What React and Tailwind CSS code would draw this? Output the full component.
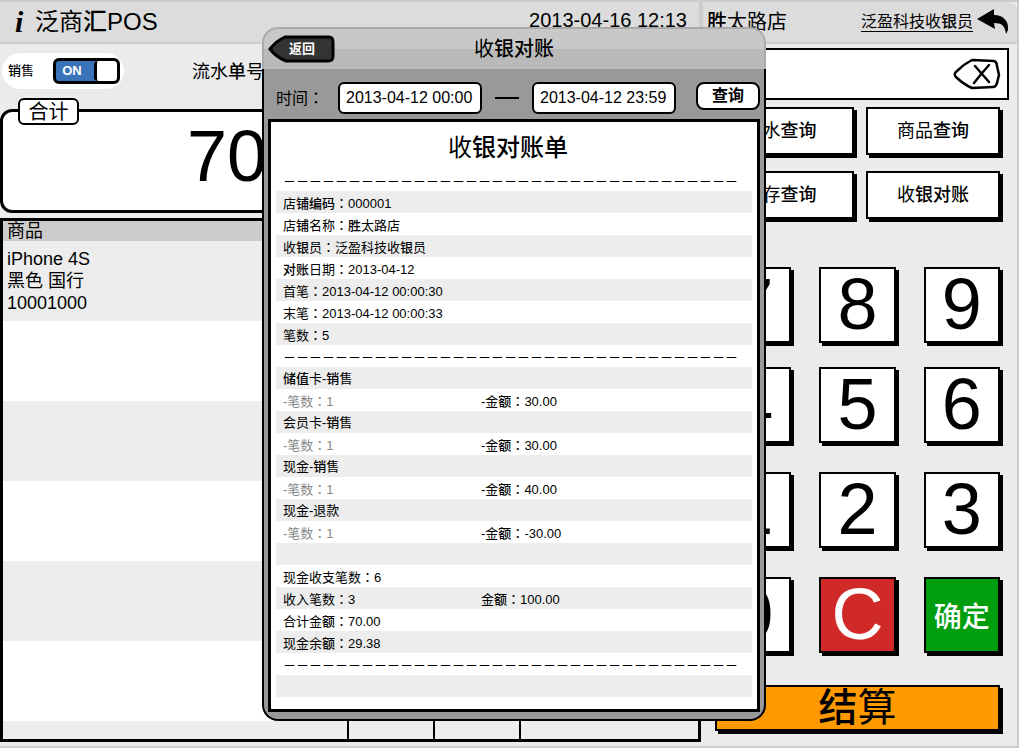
import React from "react";

const HEAVY = "汇单银对账铺编码胜储值销询查结额";

// Sets each run of characters in its own weight; the fullwidth colon sits centred in its box.
function T({ children }) {
  const runs = [];
  for (const ch of children) {
    const kind = ch === "：" ? "colon" : HEAVY.includes(ch) ? "heavy" : "plain";
    const last = runs[runs.length - 1];
    if (last && last.kind === kind) last.text += ch;
    else runs.push({ kind, text: ch });
  }
  return (
    <span>
      {runs.map((r, i) => {
        if (r.kind === "heavy") return <span key={i} className="font-medium">{r.text}</span>;
        if (r.kind === "colon") return <span key={i} className="font-['Noto_Sans_CJK_TC']">{r.text}</span>;
        return r.text;
      })}
    </span>
  );
}

const DASHES = "－".repeat(35);

const receipt = [
  ["店铺编码：000001"],
  ["店铺名称：胜太路店"],
  ["收银员：泛盈科技收银员"],
  ["对账日期：2013-04-12"],
  ["首笔：2013-04-12 00:00:30"],
  ["末笔：2013-04-12 00:00:33"],
  ["笔数：5"],
  [DASHES],
  ["储值卡-销售"],
  ["-笔数：1", "-金额：30.00"],
  ["会员卡-销售"],
  ["-笔数：1", "-金额：30.00"],
  ["现金-销售"],
  ["-笔数：1", "-金额：40.00"],
  ["现金-退款"],
  ["-笔数：1", "-金额：-30.00"],
  [""],
  ["现金收支笔数：6"],
  ["收入笔数：3", "金额：100.00"],
  ["合计金额：70.00"],
  ["现金余额：29.38"],
  [DASHES],
  [""],
];

function BackspaceIcon() {
  return (
    <svg width="48" height="32" viewBox="0 0 48 32" fill="none" stroke="#000" strokeLinecap="round" strokeLinejoin="round" aria-hidden="true">
      <path d="M19 2 L41 3 Q44 4 44 8 L46 17 L44 25 Q43 29 40 29 L19 30 Q10 26 3 19 Q0 16 4 13 Q11 6 19 2 Z" strokeWidth="2.5" />
      <path d="M22 8 L36 24 M36 7 Q28 16 21 25" strokeWidth="2.5" />
    </svg>
  );
}

function ReplyIcon() {
  return (
    <svg width="32" height="26" viewBox="0 0 32 26" aria-hidden="true">
      <path d="M0 10 L17 0 L17 6 C26 6 32 12 31 21 L29 25 C28 17 25 14 17 14 L18 20 Z" fill="#000" />
    </svg>
  );
}

function Key({ label, className = "bg-white pb-0.5 text-7xl" }) {
  return (
    <button className={`flex h-[76px] items-center justify-center border-2 border-black leading-none shadow-[3px_3px_0_#000] ${className}`}>
      {label}
    </button>
  );
}

function Action({ label, className = "" }) {
  return (
    <button className={`h-12 border-2 border-black bg-white text-lg shadow-[3px_3px_0_#000] ${className}`}>
      <T>{label}</T>
    </button>
  );
}

function Sales() {
  return (
    <section className="flex min-w-0 flex-1 flex-col">
      <header className="flex h-[42px] items-center justify-between border-b-2 border-r-2 border-[#ccc] bg-[#dcdcdc] pr-3 pl-[15px]">
        <h1 className="flex items-center gap-2 text-2xl">
          <span className="w-3 font-['Liberation_Serif',serif] text-3xl leading-none font-bold italic">i</span>
          <T>泛商汇POS</T>
        </h1>
        <time className="pb-1 text-xl">2013-04-16 12:13</time>
      </header>

      <div className="flex h-[54px] items-center pl-0.5">
        <label className="flex h-9 w-[122px] items-center justify-between rounded-full bg-white pr-1 pl-1.5 text-[13px]">
          <T>销售</T>
          <span className="relative flex h-[26px] w-[67px] rounded-md border-3 border-black bg-[#3b73b9]">
            <input type="checkbox" defaultChecked className="absolute inset-0 opacity-0" />
            <span className="flex flex-1 items-center justify-center pr-1.5 text-[13px] font-bold text-white">ON</span>
            <span className="w-[23px] rounded-sm border-l-3 border-black bg-white" />
          </span>
        </label>
        <span className="ml-[68px] text-lg"><T>流水单号：</T></span>
      </div>

      <div className="relative mt-[11px] mr-1 flex h-[104px] items-center rounded-xl border-3 border-black bg-white pb-2.5 pl-[184px]">
        <h2 className="absolute -top-3.5 left-[15px] flex h-[27px] w-[61px] items-center justify-center rounded-md border-2 border-black bg-white text-xl">
          合计
        </h2>
        <output className="text-7xl leading-none">70.00</output>
      </div>

      <div className="mt-[5px] mb-1 flex flex-1 flex-col overflow-hidden border-3 border-black">
        <table className="w-full table-fixed border-collapse">
          <thead>
            <tr className="h-5 bg-[#ccc]">
              <th className="w-[345px] px-1 text-left text-lg leading-5 font-normal">商品</th>
              <th className="w-[86px]" />
              <th className="w-[86px]" />
              <th />
            </tr>
          </thead>
          <tbody>
            {[0, 1, 2, 3, 4, 5].map((n) => (
              <tr key={n} className="h-20 odd:bg-[#ededed] even:bg-white">
                <td className="border-r-2 border-black px-1 py-0 text-lg leading-[22px]">
                  {n === 0 && (<>iPhone 4S<br />黑色 国行<br />10001000</>)}
                </td>
                <td className="border-r-2 border-black" />
                <td className="border-r-2 border-black" />
                <td />
              </tr>
            ))}
            <tr className="h-[18px] bg-[#ededed]">
              <td className="border-r-2 border-black" />
              <td className="border-r-2 border-black" />
              <td className="border-r-2 border-black" />
              <td />
            </tr>
          </tbody>
        </table>
      </div>
    </section>
  );
}

function Register() {
  return (
    <aside className="flex w-[318px] shrink-0 flex-col border-r-2 border-[#ccc]">
      <header className="flex h-[42px] items-center justify-between rounded-tr-lg border-b-2 border-l-2 border-[#ccc] bg-[#dcdcdc] pr-2 pl-1">
        <span className="text-xl"><T>胜太路店</T></span>
        <span className="flex items-center gap-1">
          <a href="#cashier" className="text-base underline underline-offset-4"><T>泛盈科技收银员</T></a>
          <button aria-label="退出"><ReplyIcon /></button>
        </span>
      </header>
      <div className="mt-1 mr-2 ml-1.5 flex h-[52px] items-center border-2 border-black bg-white pr-1.5">
        <input aria-label="输入" className="h-full min-w-0 flex-1 bg-transparent px-2 outline-none" />
        <button aria-label="删除"><BackspaceIcon /></button>
      </div>
      <div className="mt-[7px] mr-[17px] ml-1.5 flex flex-col gap-4">
        <div className="flex gap-3">
          <Action label="流水查询" className="flex-1" />
          <Action label="商品查询" className="w-[134px]" />
        </div>
        <div className="flex gap-3">
          <Action label="库存查询" className="flex-1" />
          <Action label="收银对账" className="w-[134px]" />
        </div>
      </div>
      <div className="mt-12 mr-[17px] ml-3.5 grid grid-cols-3 grid-rows-[100px_105px_105px_76px] gap-x-7">
        {["7", "8", "9", "4", "5", "6", "1", "2", "3", "0"].map((d) => (
          <Key key={d} label={d} />
        ))}
        <Key label="C" className="bg-[#cf2a28] pb-0.5 text-7xl text-white" />
        <Key label="确定" className="bg-[#009e0f] pt-1.5 text-[28px] font-medium text-white" />
      </div>
      <button className="mt-8 mr-[17px] ml-3.5 flex h-[46px] items-center justify-center border-2 border-black bg-[#ff9900] pb-0.5 text-[39px] leading-none shadow-[3px_3px_0_#000]">
        <T>结算</T>
      </button>
    </aside>
  );
}

function Reconcile() {
  return (
    <div role="dialog" aria-label="收银对账" className="absolute top-[25px] left-[262px] w-[504px]">
      <header className="relative flex h-[42px] items-center justify-center rounded-t-2xl border-2 border-b-0 border-[#aaa] bg-linear-to-b from-[#c8c8c8] from-50% to-[#bababa] to-50%">
        <button className="absolute top-1.5 left-1 flex h-7 w-[68px] items-center justify-center text-[13px] font-bold text-white">
          <svg className="absolute inset-0" width="68" height="28" viewBox="0 0 68 28" aria-hidden="true">
            <path d="M17 2 L61 2 Q65 2 65 7 L65 21 Q65 26 60 26 L18 26 Q8 22 2 14 Q8 6 17 2 Z" fill="#333" stroke="#000" strokeWidth="3" />
          </svg>
          <span className="relative">返回</span>
        </button>
        <h2 className="text-xl"><T>收银对账</T></h2>
      </header>
      <div className="rounded-b-2xl border-2 border-t-0 border-black bg-[#999] pb-[7px]">
        <form className="flex h-[50px] items-center pt-2 pr-1 pl-3 text-base" onSubmit={(e) => e.preventDefault()}>
          <label htmlFor="from" className="w-[62px]"><T>时间：</T></label>
          <input id="from" defaultValue="2013-04-12 00:00" className="h-8 w-36 rounded-md border-2 border-black bg-white px-1.5" />
          <span className="mx-[13px] h-0.5 w-6 bg-black" />
          <input aria-label="结束时间" defaultValue="2013-04-12 23:59" className="h-8 w-36 rounded-md border-2 border-black bg-white px-1.5" />
          <button className="mb-1 ml-auto h-7 w-16 rounded-lg border-2 border-black bg-white leading-none font-bold">查询</button>
        </form>
        <div className="mx-1 border-3 border-black bg-white px-[5px] pb-3">
          <h3 className="flex h-[51px] items-center justify-center pr-3 text-2xl"><T>收银对账单</T></h3>
          <p className="h-[18px] pl-[7px] text-[13px] leading-[18px] whitespace-nowrap">{DASHES}</p>
          <ul className="text-[13px]">
            {receipt.map(([a, b], i) => (
              <li
                key={i}
                className={`flex h-[22px] pl-[7px] whitespace-nowrap odd:bg-[#ededed] ${a === DASHES ? "pt-1 leading-[18px]" : "pt-0.5 leading-5"}`}
              >
                <span className={b && a[0] === "-" ? "w-[198px] text-[#888]" : "w-[198px]"}><T>{a}</T></span>
                {b && <T>{b}</T>}
              </li>
            ))}
          </ul>
        </div>
      </div>
    </div>
  );
}

export default function App() {
  return (
    <main className="relative flex min-h-screen border-y-2 border-[#ccc] bg-[#ebebeb] font-['Liberation_Sans','Noto_Sans_CJK_SC',sans-serif] text-black">
      <Sales />
      <Register />
      <Reconcile />
    </main>
  );
}
